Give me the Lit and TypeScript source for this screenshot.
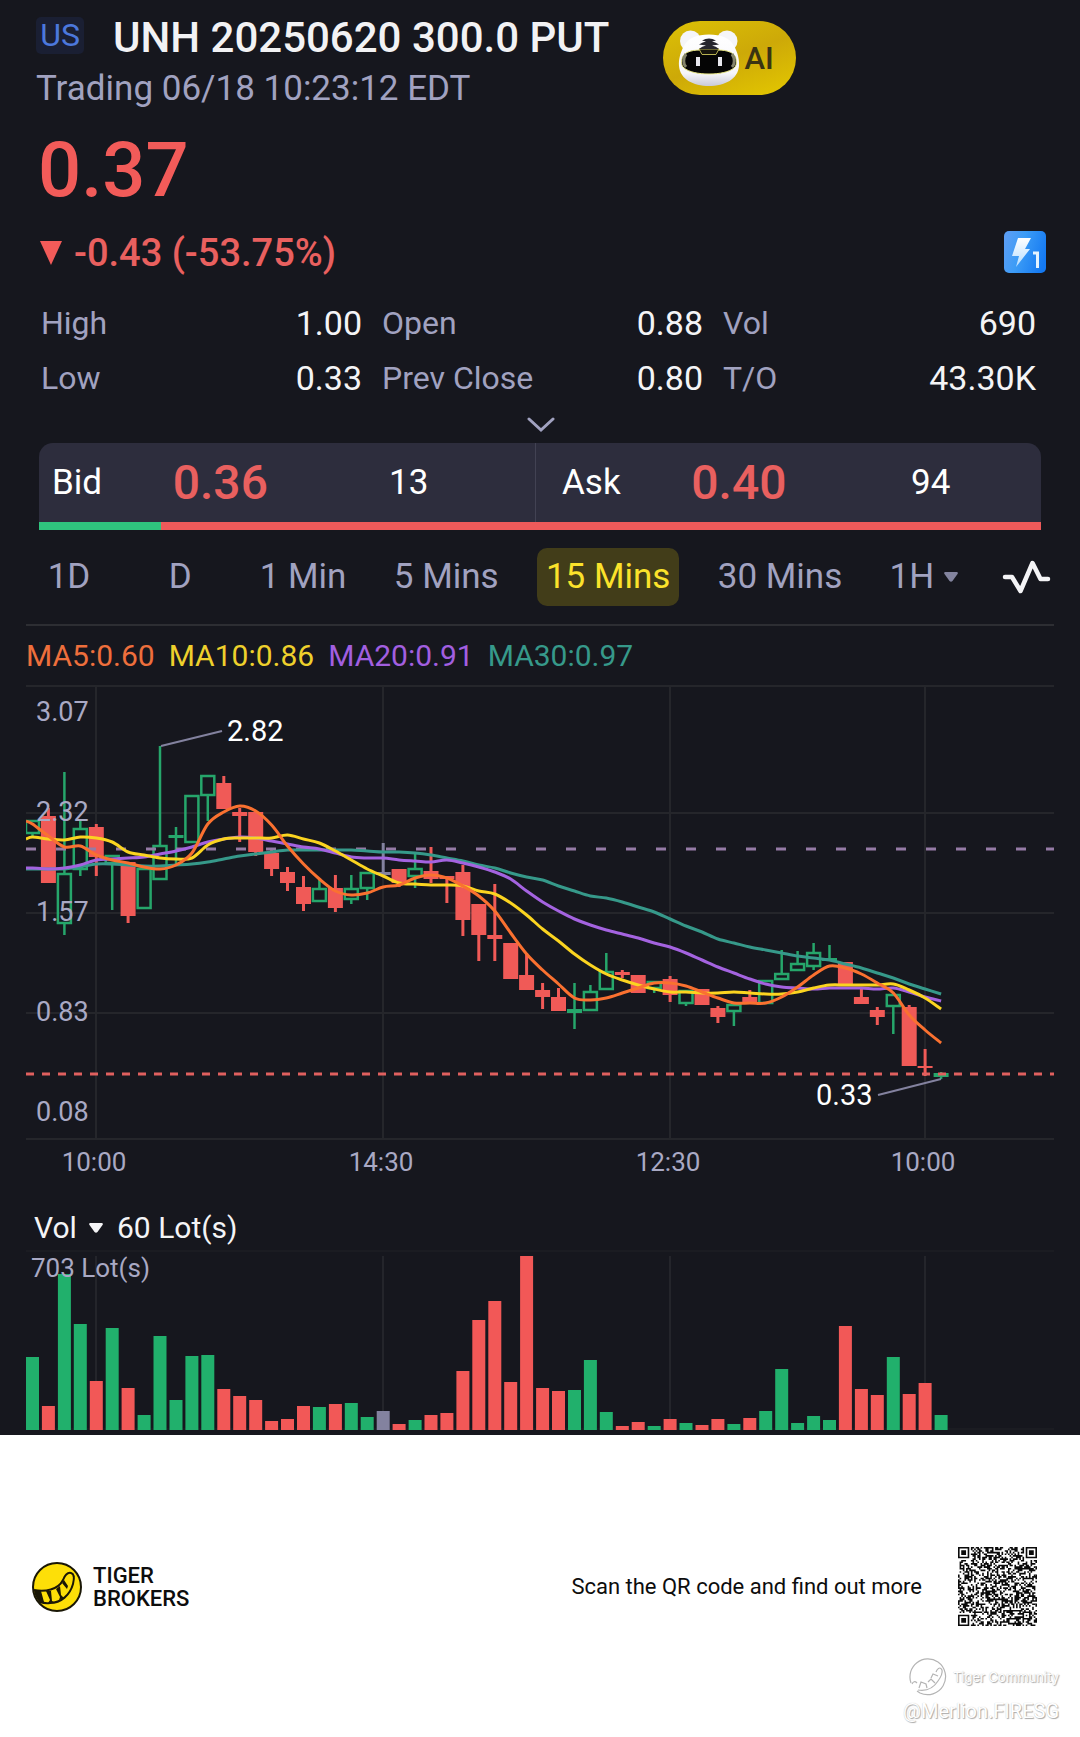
import { LitElement, html, svg, css } from "lit";
import { customElement } from "lit/decorators.js";

type Kind = "up" | "down" | "flat";
/** kind, high, body top, body bottom, low (vertical chart units) */
type Candle = [Kind, number, number, number, number];

const STEP = 15.94;
const FIRST = 6.5;
const cx = (i: number) => Math.round((FIRST + STEP * i) * 10) / 10;

const CANDLES: Candle[] = [
  ["up", 819, 819, 833, 835], ["down", 807, 815, 882, 882], ["up", 771, 872, 923, 934],
  ["up", 820, 827, 869, 875], ["down", 823, 826, 856, 875], ["up", 854, 854, 863, 909],
  ["down", 861, 861, 915, 922], ["up", 867, 867, 908, 908], ["up", 745, 844, 879, 879],
  ["up", 826, 834, 837, 863], ["up", 794, 794, 842, 842], ["up", 774, 774, 795, 820],
  ["down", 775, 782, 808, 808], ["down", 807, 811, 815, 841], ["down", 811, 811, 851, 855],
  ["down", 848, 852, 868, 875], ["down", 866, 871, 882, 890], ["down", 875, 886, 903, 910],
  ["up", 878, 887, 901, 901], ["down", 874, 887, 907, 911], ["up", 874, 887, 899, 903],
  ["up", 871, 871, 888, 899], ["flat", 842, 871, 874, 874], ["down", 868, 868, 882, 886],
  ["up", 852, 867, 876, 887], ["down", 846, 870, 878, 882], ["down", 875, 875, 878, 902],
  ["down", 864, 871, 919, 935], ["down", 903, 903, 934, 960], ["down", 883, 934, 938, 960],
  ["down", 942, 942, 978, 978], ["down", 952, 974, 989, 989], ["down", 982, 989, 996, 1008],
  ["down", 987, 996, 1010, 1010], ["up", 982, 1008, 1012, 1028], ["up", 984, 990, 1010, 1010],
  ["up", 952, 970, 989, 989], ["down", 969, 971, 974, 977], ["down", 974, 974, 992, 992],
  ["up", 980, 980, 988, 992], ["down", 975, 978, 994, 1001], ["up", 989, 989, 1003, 1005],
  ["down", 988, 988, 1004, 1004], ["down", 1005, 1007, 1016, 1022], ["up", 1003, 1003, 1011, 1025],
  ["down", 989, 996, 1003, 1003], ["up", 979, 979, 1003, 1003], ["up", 949, 972, 979, 979],
  ["up", 950, 962, 970, 970], ["up", 942, 951, 966, 969], ["up", 944, 957, 960, 960],
  ["down", 961, 961, 983, 983], ["down", 986, 996, 1003, 1003], ["down", 1006, 1009, 1016, 1024],
  ["up", 991, 993, 1006, 1033], ["down", 1004, 1006, 1065, 1065], ["down", 1048, 1065, 1067, 1075],
  ["up", 1071, 1072, 1076, 1078],
];

const AVERAGES: { name: string; start: number; points: number[] }[] = [
  { name: "ma30", start: 868, points: [868, 868, 868, 866, 863, 863, 864, 865, 865, 864, 863, 861, 858, 855, 853, 851, 849, 849, 849, 849, 849, 850, 851, 851, 852, 854, 857, 860, 864, 867, 872, 876, 879, 885, 890, 895, 897, 901, 906, 911, 918, 925, 931, 938, 942, 946, 949, 952, 955, 957, 959, 963, 967, 972, 977, 983, 988, 993] },
  { name: "ma20", start: 867, points: [867, 868, 867, 864, 859, 858, 857, 856, 853, 850, 846, 841, 838, 836, 837, 840, 843, 846, 848, 852, 856, 857, 857, 859, 860, 861, 859, 862, 866, 871, 878, 890, 901, 910, 918, 924, 929, 933, 937, 942, 946, 952, 959, 966, 972, 978, 983, 986, 987, 988, 987, 987, 987, 988, 987, 991, 996, 1000] },
  { name: "ma10", start: 838, points: [836, 838, 839, 836, 837, 841, 851, 854, 857, 858, 857, 844, 838, 837, 837, 837, 834, 838, 842, 850, 859, 868, 875, 882, 883, 884, 884, 885, 890, 893, 902, 914, 928, 940, 953, 964, 973, 979, 984, 988, 991, 991, 992, 992, 991, 992, 993, 993, 991, 987, 984, 984, 984, 984, 983, 989, 997, 1008] },
  { name: "ma5", start: 820, points: [823, 835, 846, 845, 854, 859, 862, 866, 868, 864, 852, 823, 811, 805, 810, 824, 845, 863, 878, 890, 894, 892, 886, 884, 877, 874, 877, 885, 895, 910, 932, 953, 969, 983, 997, 999, 997, 992, 987, 982, 982, 985, 991, 997, 1002, 1002, 1002, 996, 986, 974, 965, 967, 973, 982, 992, 1014, 1029, 1042] },
];

/** bar heights, tallest = 174 (703 lots) */
const VOLUMES = [
  73, 24, 156, 106, 49, 102, 42, 15, 94, 30, 74, 75, 41, 34, 30, 9, 11, 24, 23, 26, 27, 13, 19, 6, 10, 15, 17, 59, 110, 129,
  48, 174, 42, 39, 40, 70, 18, 4, 8, 4, 11, 7, 5, 11, 6, 12, 19, 61, 7, 14, 10, 104, 41, 35, 73, 36, 47, 15,
];

const GRID_X = [70, 357, 644, 899];
const GRID_Y = [685, 812, 912, 1012, 1138];
const TIMES = ["10:00", "14:30", "12:30", "10:00"];
const PRICES = ["3.07", "2.32", "1.57", "0.83", "0.08"];

const STATS = [
  ["High", "1.00"], ["Open", "0.88"], ["Vol", "690"],
  ["Low", "0.33"], ["Prev Close", "0.80"], ["T/O", "43.30K"],
];

/** Smooths a polyline into a chain of cubic curves. */
function smooth(start: number, points: number[]): string {
  const pts: [number, number][] = [[0, start], ...points.map((y, i) => [cx(i), y] as [number, number])];
  let d = `M${pts[0][0]} ${pts[0][1]}`;
  for (let i = 1; i < pts.length; i++) {
    const p0 = pts[Math.max(0, i - 2)], p1 = pts[i - 1], p2 = pts[i], p3 = pts[Math.min(pts.length - 1, i + 1)];
    const f = (n: number) => n.toFixed(1);
    d += `C${f(p1[0] + (p2[0] - p0[0]) / 6)} ${f(p1[1] + (p2[1] - p0[1]) / 6)} ${f(p2[0] - (p3[0] - p1[0]) / 6)} ${f(p2[1] - (p3[1] - p1[1]) / 6)} ${p2[0]} ${p2[1]}`;
  }
  return d;
}

@customElement("price-chart")
class PriceChart extends LitElement {
  static styles = css`
    :host { display: block; }
    svg { display: block; width: 100%; height: auto; font-family: Roboto, "Liberation Sans", sans-serif; }
    .grid { stroke: #25262b; stroke-width: 2; }
    .up { stroke: #26a66b; fill: none; stroke-width: 2.5; }
    .up.solid { fill: #26a66b; stroke: none; }
    .down { stroke: #f05a57; fill: #f05a57; stroke-width: 3; }
    .flat { stroke: #83829f; fill: #83829f; stroke-width: 3; }
    .down.solid, .flat.solid { stroke: none; }
    .line { fill: none; stroke-width: 3; stroke-linejoin: round; }
    .ma5 { stroke: #fa7130; }
    .ma10 { stroke: #fbd420; }
    .ma20 { stroke: #a463e0; }
    .ma30 { stroke: #36998a; }
    .prev { stroke: #957ba6; stroke-width: 3; stroke-dasharray: 10 20; }
    .last { stroke: #e0605f; stroke-width: 3; stroke-dasharray: 8 8; }
    .pointer { stroke: #83829f; stroke-width: 2; fill: none; }
    .axis { fill: #a9a9c4; font-size: 26px; }
    .scale { font-size: 27px; }
    .time { text-anchor: middle; }
    .mark { fill: #ffffff; font-size: 29px; }
  `;

  private candle([kind, high, top, bottom, low]: Candle, i: number) {
    const x = cx(i);
    const hollow = kind === "up" && bottom - top > 4;
    return svg`
      ${high < top ? svg`<path class=${kind} d="M${x} ${high}V${top}"></path>` : ""}
      ${low > bottom ? svg`<path class=${kind} d="M${x} ${bottom}V${low}"></path>` : ""}
      ${hollow
        ? svg`<rect class="up" x=${x - 6.5} y=${top + 1} width="13" height=${bottom - top - 2}></rect>`
        : svg`<rect class="${kind} solid" x=${x - 7.5} y=${top} width="15" height=${bottom - top}></rect>`}`;
  }

  render() {
    return html`<svg viewBox="0 684 1028 500" role="img" aria-label="15 minute candles">
      ${GRID_Y.map((y) => svg`<path class="grid" d="M0 ${y}H1028"></path>`)}
      ${GRID_X.map((x) => svg`<path class="grid" d="M${x} 685V1138"></path>`)}
      ${CANDLES.map((c, i) => this.candle(c, i))}
      <path class="prev" d="M0 848H1028"></path>
      ${AVERAGES.map((a) => svg`<path class="line ${a.name}" d=${smooth(a.start, a.points)}></path>`)}
      <path class="last" d="M0 1073H1028"></path>
      <path class="pointer" d="M135 745L196 730"></path>
      <path class="pointer" d="M852 1094L915 1078"></path>
      <text class="mark" x="201" y="740">2.82</text>
      <text class="mark" x="790" y="1104">0.33</text>
      ${PRICES.map((p, i) => svg`<text class="axis scale" x="10" y=${720 + i * 100}>${p}</text>`)}
      ${TIMES.map((t, i) => svg`<text class="axis time" x=${GRID_X[i] - 2} y="1170">${t}</text>`)}
    </svg>`;
  }
}

@customElement("volume-chart")
class VolumeChart extends LitElement {
  static styles = css`
    :host { display: block; }
    svg { display: block; width: 100%; height: auto; font-family: Roboto, "Liberation Sans", sans-serif; }
    .grid { stroke: #24252b; stroke-width: 2; }
    .base { stroke: #1b1c22; stroke-width: 2; }
    .up { fill: #21b06c; }
    .down { fill: #f25857; }
    .flat { fill: #83829f; }
    .axis { fill: #a9a9c4; font-size: 26px; }
  `;
  render() {
    return html`<svg viewBox="0 0 1028 186" role="img" aria-label="Volume">
      <path class="base" d="M0 2H1028M0 180H1028"></path>
      ${GRID_X.map((x) => svg`<path class="grid" d="M${x} 7V181"></path>`)}
      ${VOLUMES.map((v, i) => svg`<rect class=${CANDLES[i][0]} x=${cx(i) - 6.5} y=${181 - v} width="13" height=${v}></rect>`)}
      <text class="axis" x="5" y="28">703 Lot(s)</text>
    </svg>`;
  }
}

const QR_SIZE = 49;

function qrPath(): string {
  let seed = 20250618;
  const random = () => {
    seed = (seed * 1664525 + 1013904223) >>> 0;
    return seed / 4294967296;
  };
  const square = (x: number, y: number, ox: number, oy: number, size: number) => {
    const d = Math.max(Math.abs(x - ox), Math.abs(y - oy));
    if (d > size + 1) return undefined;
    return size === 3 ? d <= 1 || d === 3 : d <= 2 ? d !== 1 : undefined;
  };
  let d = "";
  for (let y = 0; y < QR_SIZE; y++) {
    for (let x = 0; x < QR_SIZE; x++) {
      const noise = random() < 0.5;
      const fixed =
        square(x, y, 3, 3, 3) ?? square(x, y, QR_SIZE - 4, 3, 3) ?? square(x, y, 3, QR_SIZE - 4, 3) ??
        square(x, y, QR_SIZE - 7, QR_SIZE - 7, 2);
      if (fixed ?? noise) d += `M${x} ${y}h1v1h-1z`;
    }
  }
  return d;
}

@customElement("app-root")
class AppRoot extends LitElement {
  static styles = css`
    :host { display: block; background: #ffffff; font-family: Roboto, "Liberation Sans", sans-serif; }
    * { box-sizing: border-box; }
    svg { display: block; flex: none; }
    h1, p, dl, dd, dt { margin: 0; font-weight: 400; }
    button, select { font: inherit; color: inherit; background: none; border: 0; padding: 0; margin: 0; appearance: none; }
    .quote { background: #16171e; color: #ffffff; }
    .top { padding: 17px 34px 0 36px; }
    .header { display: flex; align-items: flex-start; gap: 54px; }
    .name { display: flex; align-items: flex-start; gap: 29px; }
    .market { width: 48px; height: 37px; border-radius: 5px; background: #1a1f33; color: #4c78dc; font-size: 32px; line-height: 36px; text-align: center; }
    .title { font-size: 42px; line-height: 42px; font-weight: 500; color: #f2f2f4; white-space: nowrap; }
    .status { margin-top: 10px; font-size: 35px; line-height: 40px; color: #a1a2c0; white-space: nowrap; }
    .ai { display: flex; align-items: center; gap: 4px; height: 74px; margin-top: 4px; padding: 0 22px 0 15px; border-radius: 37px; background: linear-gradient(160deg, #dcc106, #cda908 50%, #e4c800); color: #3a3412; font-size: 31px; font-weight: 500; }
    .price { margin-top: 21px; padding-left: 2px; font-size: 76px; line-height: 80px; font-weight: 500; color: #f25b59; }
    .change { display: flex; align-items: center; margin-top: 21px; gap: 12px; padding-left: 4px; font-size: 38px; line-height: 44px; font-weight: 500; color: #e9605f; }
    .level { align-self: flex-start; margin-left: auto; }
    .stats { display: grid; grid-template-columns: 321fr 321fr 313fr; column-gap: 20px; margin-top: 21px; padding: 0 10px 0 5px; line-height: 55px; }
    .stat { display: flex; justify-content: space-between; }
    .stat dt { font-size: 32px; color: #a1a2c0; }
    .stat dd { font-size: 34px; color: #f4f4f6; }
    .more { display: flex; width: 100%; height: 37px; align-items: center; justify-content: center; }
    .book { margin: 0 5px 0 3px; border-radius: 14px 14px 0 0; overflow: hidden; }
    .sides { display: grid; grid-template-columns: 496fr 506fr; background: #2d2d3d; line-height: 79px; font-size: 35px; }
    .side { display: grid; grid-template-columns: 25% 34% 1fr; padding-left: 13px; }
    .ask { grid-template-columns: 27% 35% 1fr; border-left: 1px solid #424253; padding-left: 26px; }
    .side b { font-size: 48px; font-weight: 500; color: #e9605f; }
    .size { padding-left: 52px; }
    .ratio { display: flex; height: 8px; background: #ee5a5a; }
    .buy { background: #2fc47e; }
    .tabs { display: flex; align-items: center; justify-content: space-between; margin-top: 18px; padding: 0 29px 0 28px; font-size: 35px; line-height: 58px; color: #a1a2c0; white-space: nowrap; }
    .tab { padding: 0 9px; border-radius: 10px; }
    .short { min-width: 82px; }
    .active { background: #423d19; color: #fbe22b; }
    .pick { display: flex; align-items: center; gap: 9px; }
    .hour { padding-left: 9px; }
    .draw { margin-left: 14px; }
    .averages { display: flex; gap: 14px; margin: 18px 26px 0; border-top: 2px solid #2d2e33; font-size: 30px; line-height: 59px; }
    .ma5 { color: #ee6f3c; }
    .ma10 { color: #eed02c; }
    .ma20 { color: #a25fe0; }
    .ma30 { color: #36998a; }
    .chart { margin: 0 26px; }
    .volume { display: flex; align-items: center; gap: 14px; padding: 21px 34px 0; font-size: 30px; line-height: 43px; color: #f4f4f6; }
    .volume .pick { gap: 12px; }
    .brandbar { display: flex; align-items: center; padding: 112px 43px 0 32px; color: #0d0d0d; }
    .brand { margin-left: 11px; font-size: 22px; line-height: 23px; font-weight: 500; }
    .scan { margin-left: auto; margin-right: 36px; font-size: 22px; line-height: 26px; }
    .watermark { display: flex; flex-direction: column; align-items: flex-end; padding: 32px 21px 12px; color: #ffffff; text-shadow: 1px 1px 1px #a8a8a8, 0 0 1px #c4c4c4; }
    .community { display: flex; align-items: center; gap: 6px; font-family: Inter, sans-serif; font-size: 13px; line-height: 38px; }
    .author { font-size: 20px; line-height: 30px; }
  `;

  private tiger() {
    return html`<svg width="62" height="58" viewBox="0 0 62 58" aria-hidden="true">
      <defs>
        <linearGradient id="fur" x1="0" y1="0" x2="0" y2="1">
          <stop offset="0" stop-color="#ffffff"></stop><stop offset=".75" stop-color="#f6f6fa"></stop><stop offset="1" stop-color="#c9cad8"></stop>
        </linearGradient>
      </defs>
      <circle cx="12.5" cy="12" r="10.5" fill="#f5f5f8"></circle>
      <circle cx="49" cy="12" r="10.5" fill="#f5f5f8"></circle>
      <path d="M31 5.500C43 5.500 52 9 56 17C60 24 61.500 31 61 37C60 50 47 57 31 57S2 50 1 37C.5 31 2 24 6 17C10 9 19 5.500 31 5.500Z" fill="url(#fur)"></path>
      <path d="M31 22C42 20 53 21 57 27C59 31 59 37 56 39C51 43 42 45 31 45S11 43 6 39C3 37 3 31 5 27C9 21 20 20 31 22Z" fill="#050505" stroke="#f0ee8c" stroke-width="1"></path>
      <path d="M8 25C5 29 5 35 8 38M54 25C57 29 57 35 54 38" fill="none" stroke="#85856c" stroke-width="3"></path>
      <path d="M21 20H41L38 25.500H24Z" fill="#16140c" stroke="#b9b352" stroke-width="1"></path>
      <path d="M24 11.500Q31 7.500 38 11.500L34 12.500Q37 13 41 15.500L34 16.500Q38 17 41 20H21Q24 17 28 16.500L21 15.500Q25 13 28 12.500Z" fill="#26262e"></path>
      <path d="M18 28h4v9h-4zM40 28h4v9h-4z" fill="#e8e8ee"></path>
    </svg>`;
  }

  private caret(color: string) {
    return html`<svg width="14" height="10" viewBox="0 0 14 10" aria-hidden="true"><path d="M1 0H13Q14.500 .5 13.500 2L8.500 9Q7 10.500 5.500 9L.5 2Q-.5 .5 1 0Z" fill=${color}></path></svg>`;
  }

  render() {
    return html`
      <main class="quote">
        <div class="top">
          <header class="header">
            <div>
              <div class="name"><span class="market">US</span><h1 class="title">UNH 20250620 300.0 PUT</h1></div>
              <p class="status">Trading 06/18 10:23:12 EDT</p>
            </div>
            <button class="ai">${this.tiger()}<span>AI</span></button>
          </header>
          <p class="price">0.37</p>
          <div class="change">
            <svg width="22" height="24" viewBox="0 0 22 24" aria-hidden="true"><path d="M0 0H22L11 24Z" fill="#f25b59"></path></svg>
            <span>-0.43 (-53.75%)</span>
            <svg class="level" width="42" height="42" viewBox="0 0 42 42" role="img" aria-label="Level 1 quotes">
              <defs>
                <linearGradient id="blue" x1="0" y1=".3" x2="1" y2=".6"><stop offset="0" stop-color="#5a9ef5"></stop><stop offset=".4" stop-color="#3c9cf6"></stop><stop offset="1" stop-color="#1479f2"></stop></linearGradient>
                <linearGradient id="bolt" x1="0" y1="0" x2="0" y2="1"><stop offset="0" stop-color="#ffffff"></stop><stop offset="1" stop-color="#b4dcff"></stop></linearGradient>
              </defs>
              <rect width="42" height="42" rx="5" fill="url(#blue)"></rect>
              <path d="M14 7H27L21 18H26L12 36L15 25H8Z" fill="url(#bolt)"></path>
              <path d="M29 22H33.500V37" fill="none" stroke="#e4f3ff" stroke-width="3"></path>
            </svg>
          </div>
          <dl class="stats">
            ${STATS.map(([label, value]) => html`<div class="stat"><dt>${label}</dt><dd>${value}</dd></div>`)}
          </dl>
          <button class="more" aria-label="Show more">
            <svg width="28" height="16" viewBox="0 0 28 16" aria-hidden="true"><path d="M2 2L14 13L26 2" fill="none" stroke="#a1a2c0" stroke-width="3" stroke-linecap="round"></path></svg>
          </button>
          <section class="book">
            <div class="sides">
              <div class="side"><span>Bid</span><b>0.36</b><span class="size">13</span></div>
              <div class="side ask"><span>Ask</span><b>0.40</b><span class="size">94</span></div>
            </div>
            <div class="ratio"><span class="buy" style="width:${(13 / 107) * 100}%"></span></div>
          </section>
        </div>
        <nav class="tabs">
          <button class="tab short">1D</button>
          <button class="tab short">D</button>
          <button class="tab">1 Min</button>
          <button class="tab">5 Mins</button>
          <button class="tab active" aria-pressed="true">15 Mins</button>
          <button class="tab">30 Mins</button>
          <span class="pick hour"><select aria-label="Hourly interval"><option>1H</option></select>${this.caret("#83849f")}</span>
          <button class="draw" aria-label="Indicators">
            <svg width="50" height="36" viewBox="0 0 50 36" aria-hidden="true"><path d="M4 18H11L19.500 32L31.500 4L39.500 20H47" fill="none" stroke="#f4f4f6" stroke-width="4.500" stroke-linecap="round" stroke-linejoin="round"></path></svg>
          </button>
        </nav>
        <div class="averages">
          <span class="ma5">MA5:0.60</span><span class="ma10">MA10:0.86</span><span class="ma20">MA20:0.91</span><span class="ma30">MA30:0.97</span>
        </div>
        <price-chart class="chart"></price-chart>
        <div class="volume">
          <span class="pick"><select aria-label="Lower indicator"><option>Vol</option></select>${this.caret("#f4f4f6")}</span>
          <span>60 Lot(s)</span>
        </div>
        <volume-chart class="chart"></volume-chart>
      </main>
      <footer>
        <div class="brandbar">
          <svg width="50" height="50" viewBox="0 0 50 50" aria-hidden="true">
            <circle cx="25" cy="25" r="24" fill="#fddf08" stroke="#1a1706" stroke-width="2"></circle>
            <path d="M2 28C13 30 26 28 31 18C33 13 35 10 39 11C43 12 42 18 41 22C38 33 29 41 18 41C14 41.500 11 41 8 40" fill="none" stroke="#1a1706" stroke-width="2"></path>
            <path d="M2 28L9 29L12 40L8 41Q2 34 2 28ZM14 29L19 29L20 39L22 40L16 41L18 38ZM24 27L28 24L29 33L32 36L27 38L28 35ZM30 21L32 18L36 24L35 27Z" fill="#1a1706"></path>
          </svg>
          <p class="brand">TIGER<br />BROKERS</p>
          <p class="scan">Scan the QR code and find out more</p>
          <svg width="79" height="79" viewBox="0 0 ${QR_SIZE} ${QR_SIZE}" role="img" aria-label="QR code"><path d=${qrPath()} fill="#0a0a0a"></path></svg>
        </div>
        <div class="watermark">
          <div class="community">
            <svg width="38" height="38" viewBox="0 0 38 38" aria-hidden="true">
              <g fill="none" stroke="#b4b4b4" stroke-width="1.200">
                <path d="M2 25A18 18 0 0 1 29 4"></path><path d="M29 4A18 18 0 0 1 11 35L8 33"></path>
                <path d="M3 26Q5 22 8 25M9 32Q22 34 29 23Q34 16 33 12Q31 8 28 12L27 14M10 30L12 24L17 26L18 30M19 24L22 21L26 25M22 20L24 16L29 18"></path>
              </g>
            </svg>
            <span>Tiger Community</span>
          </div>
          <p class="author">@Merlion.FIRESG</p>
        </div>
      </footer>`;
  }
}
